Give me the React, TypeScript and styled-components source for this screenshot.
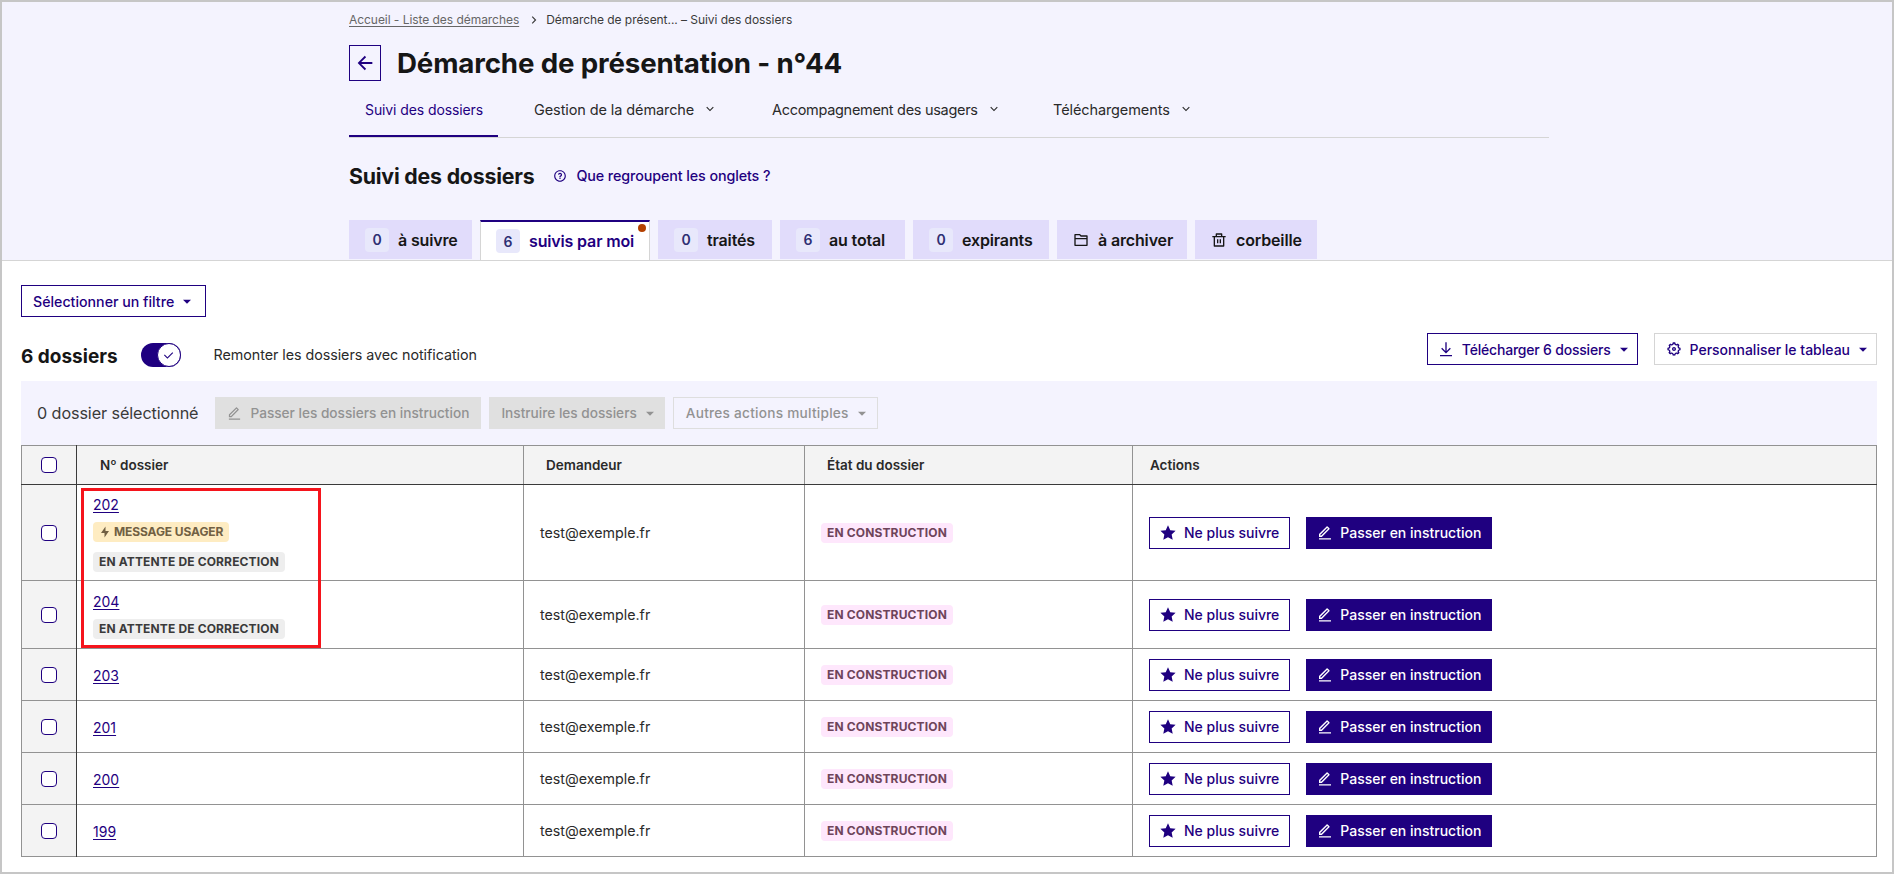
import styled, { createGlobalStyle } from "styled-components"
import {
  RiArrowDownSFill,
  RiArrowDownSLine,
  RiArrowLeftLine,
  RiArrowRightSLine,
  RiCheckLine,
  RiDeleteBinLine,
  RiEditLine,
  RiFlashlightFill,
  RiFolder2Line,
  RiQuestionLine,
  RiSettings5Line,
  RiStarFill,
} from "react-icons/ri"

const PRIMARY = "#1f0080"
const FONT = `"Inter", "Noto Sans", "Liberation Sans", sans-serif`

const GlobalStyle = createGlobalStyle`
  * {
    box-sizing: border-box;
  }

  html, body {
    margin: 0;
    padding: 0;
    background: #fff;
    color: #161616;
    font-family: ${FONT};
  }
`

const Page = styled.div`
  width: 1894px;
  height: 874px;
  overflow: hidden;
  border: 2px solid #c6c6c6;
  background: #fff;
`

const Header = styled.header`
  height: 259px;
  background: #f4f3fe;
  border-bottom: 1px solid #d5d5d5;
`

const HeaderInner = styled.div`
  width: 1200px;
  margin-left: 347px;
  height: 100%;
  display: flex;
  flex-direction: column;
`

const Breadcrumb = styled.nav`
  display: flex;
  align-items: center;
  height: 16px;
  margin-top: 10px;
  font-size: 12px;
  letter-spacing: -0.05px;
  color: #3a3a3a;

  a {
    color: #666;
    text-decoration: underline;
    text-underline-offset: 2px;
  }

  svg {
    margin: 0 5px 0 8px;
  }
`

const TitleRow = styled.div`
  display: flex;
  align-items: center;
  gap: 16px;
  margin-top: 18px;
`

const BackButton = styled.button`
  width: 32px;
  height: 36px;
  padding: 0;
  display: flex;
  align-items: center;
  justify-content: center;
  background: transparent;
  border: 1px solid ${PRIMARY};
  color: ${PRIMARY};
`

const Title = styled.h1`
  margin: 0;
  font-size: 27.7px;
  line-height: 36px;
  font-weight: 700;
  letter-spacing: -0.15px;
  color: #161616;
`

const MainNav = styled.nav`
  display: flex;
  gap: 20px;
  height: 57px;
  border-bottom: 1px solid #d5d5d5;
`

const NavItem = styled.a<{ $active?: boolean; $tight?: boolean; $width: number }>`
  flex-shrink: 0;
  display: flex;
  align-items: center;
  gap: 9px;
  width: ${(p) => p.$width}px;
  height: 56px;
  padding-left: 16px;
  font-size: ${(p) => (p.$active ? 14 : 14.5)}px;
  letter-spacing: ${(p) => (p.$tight ? "-0.3px" : "-0.1px")};
  white-space: nowrap;
  color: ${(p) => (p.$active ? PRIMARY : "#2a2a2a")};
  box-shadow: ${(p) => (p.$active ? `inset 0 -2px 0 ${PRIMARY}` : "none")};
`

const SectionRow = styled.div`
  display: flex;
  align-items: center;
  margin-top: 20px;
  height: 36px;
`

const SectionTitle = styled.h2`
  margin: 0;
  font-size: 21.3px;
  font-weight: 700;
  letter-spacing: -0.2px;
  color: #161616;
`

const HelpLink = styled.a`
  display: flex;
  align-items: center;
  gap: 9px;
  margin-left: 19px;
  font-size: 14.3px;
  font-weight: 500;
  letter-spacing: -0.1px;
  color: ${PRIMARY};
`

const Tabs = styled.div`
  display: flex;
  gap: 8px;
  margin-top: 27px;
`

const Tab = styled.div<{ $active?: boolean; $width: number }>`
  position: relative;
  flex-shrink: 0;
  display: flex;
  align-items: center;
  gap: 9px;
  width: ${(p) => p.$width}px;
  height: ${(p) => (p.$active ? 40 : 39)}px;
  padding-left: ${(p) => (p.$active ? 15 : 16)}px;
  font-size: 16px;
  font-weight: 600;
  letter-spacing: -0.15px;
  white-space: nowrap;
  color: ${(p) => (p.$active ? PRIMARY : "#161616")};
  background: ${(p) => (p.$active ? "#fff" : "#e1dcfb")};
  border-top: ${(p) => (p.$active ? `2px solid ${PRIMARY}` : "none")};
  border-left: ${(p) => (p.$active ? "1px solid #d5d5d5" : "none")};
  border-right: ${(p) => (p.$active ? "1px solid #d5d5d5" : "none")};
`

const TabCount = styled.span`
  display: flex;
  align-items: center;
  justify-content: center;
  width: 24px;
  height: 24px;
  border-radius: 4px;
  background: #e8e8fb;
  color: #2f2f73;
  font-size: 14px;
  font-weight: 600;
`

const TabDot = styled.span`
  position: absolute;
  top: 2px;
  right: 3px;
  width: 8px;
  height: 8px;
  border-radius: 50%;
  background: #b34000;
`

const Content = styled.main`
  padding: 24px 15px 0 19px;
`

const Caret = styled(RiArrowDownSFill)`
  flex-shrink: 0;
  margin: 0 -5px 0 -3px;
`

const OutlineButton = styled.button<{ $muted?: boolean; $tight?: boolean }>`
  display: inline-flex;
  align-items: center;
  gap: 8px;
  height: 32px;
  padding: 0 10px 0 ${(p) => (p.$muted ? 11 : 10)}px;
  background: #fff;
  border: 1px solid ${(p) => (p.$muted ? "#d5d5d5" : PRIMARY)};
  color: ${PRIMARY};
  font-family: ${FONT};
  font-size: 14px;
  font-weight: 500;
  letter-spacing: ${(p) => (p.$tight ? "-0.2px" : "0")};
  white-space: nowrap;
`

const FilterButton = styled(OutlineButton)`
  padding: 0 15px 0 11px;
  font-size: 14.2px;
`

const SummaryRow = styled.div`
  display: flex;
  align-items: flex-start;
  margin-top: 16px;
  height: 32px;
`

const DossierCount = styled.strong`
  margin-top: 10px;
  font-size: 19px;
  line-height: 28px;
  font-weight: 700;
`

const Toggle = styled.span`
  position: relative;
  flex-shrink: 0;
  width: 40px;
  height: 24px;
  margin: 10px 0 0 23px;
  border-radius: 12px;
  background: ${PRIMARY};
`

const ToggleThumb = styled.span`
  position: absolute;
  top: 0;
  right: 0;
  width: 24px;
  height: 24px;
  display: flex;
  align-items: center;
  justify-content: center;
  border-radius: 50%;
  border: 1px solid ${PRIMARY};
  background: #fff;
  color: ${PRIMARY};
`

const ToggleLabel = styled.span`
  margin: 12px 0 0 33px;
  font-size: 14.3px;
  line-height: 20px;
  letter-spacing: -0.05px;
  color: #2a2a2a;
`

const SummaryActions = styled.div`
  display: flex;
  gap: 16px;
  margin-left: auto;
`

const BulkBar = styled.div`
  display: flex;
  align-items: center;
  gap: 8px;
  height: 64px;
  margin-top: 16px;
  padding-left: 16px;
  background: #f4f3fe;
`

const BulkLabel = styled.span`
  margin-right: 9px;
  font-size: 16.2px;
  letter-spacing: -0.1px;
  color: #3a3a3a;
`

const DisabledButton = styled.button<{ $outlined?: boolean }>`
  display: inline-flex;
  align-items: center;
  gap: 8px;
  height: 32px;
  padding: 0 12px;
  background: ${(p) => (p.$outlined ? "transparent" : "#e0e0e0")};
  border: ${(p) => (p.$outlined ? "1px solid #dedede" : "none")};
  color: #929292;
  font-family: ${FONT};
  font-size: 13.65px;
  font-weight: 500;
  letter-spacing: ${(p) => (p.$outlined ? "0.25px" : "0")};
  white-space: nowrap;
`

const TableWrap = styled.div`
  position: relative;
`

const Table = styled.table`
  width: 1856px;
  table-layout: fixed;
  border-collapse: collapse;
  border: 1px solid #929292;
`

const HeadCell = styled.th<{ $pad?: number }>`
  height: 39px;
  padding: 0 0 0 ${(p) => p.$pad ?? 17}px;
  background: #f3f3f3;
  border-left: 1px solid #929292;
  border-bottom: 1px solid #3a3a3a;
  text-align: left;
  font-size: 13.5px;
  font-weight: 600;
  color: #2a2a2a;
`

const CheckHeadCell = styled(HeadCell)`
  padding: 0;
  border-left: none;
  border-right: 1px solid #3a3a3a;
`

const Row = styled.tr`
  border-bottom: 1px solid #929292;

  &:last-child {
    border-bottom: none;
  }
`

const Cell = styled.td<{ $height?: number }>`
  height: ${(p) => p.$height ?? 52}px;
  padding: 0 0 0 16px;
  border-left: 1px solid #929292;
  font-size: 14.25px;
  color: #2a2a2a;
`

const CheckCell = styled.td`
  padding: 0;
  background: #f3f3f3;
  border-right: 1px solid #3a3a3a;
`

const Checkbox = styled.span`
  display: block;
  width: 16px;
  height: 16px;
  margin-left: 19px;
  border: 1px solid ${PRIMARY};
  border-radius: 4px;
  background: #fff;
`

const NumberStack = styled.div`
  display: flex;
  flex-direction: column;
  align-items: flex-start;
  gap: 10px;
  padding-top: 2px;
`

const DossierLink = styled.a<{ $stacked?: boolean }>`
  margin-bottom: ${(p) => (p.$stacked ? -2 : 0)}px;
  color: ${PRIMARY};
  font-size: 14px;
  line-height: 18px;
  text-decoration: underline;
  text-underline-offset: 2px;
`

const Badge = styled.span<{ $bg: string; $fg: string; $tight?: boolean }>`
  display: inline-flex;
  align-items: center;
  gap: 3px;
  height: 20px;
  padding: 0 6px;
  border-radius: 4px;
  background: ${(p) => p.$bg};
  color: ${(p) => p.$fg};
  font-size: 12px;
  font-weight: 700;
  letter-spacing: ${(p) => (p.$tight ? "-0.1px" : "0.15px")};
  white-space: nowrap;
`

const Actions = styled.div`
  display: flex;
  gap: 16px;
`

const PrimaryButton = styled.button`
  display: inline-flex;
  align-items: center;
  gap: 7px;
  height: 32px;
  padding: 0 11px;
  background: ${PRIMARY};
  border: none;
  color: #fff;
  font-family: ${FONT};
  font-size: 14px;
  font-weight: 500;
  white-space: nowrap;
`

const Highlight = styled.div`
  position: absolute;
  top: 43px;
  left: 60px;
  width: 240px;
  height: 160px;
  border: 3px solid #f5141c;
  pointer-events: none;
`

const DownloadIcon = () => (
  <svg width="16" height="16" viewBox="0 0 24 24" fill="none" stroke="currentColor" strokeWidth="2">
    <path d="M12 2v15M5.5 11l6.5 6.5 6.5-6.5M3 22h18" />
  </svg>
)

const dossiers = [
  { id: 202, height: 96, message: true, correction: true },
  { id: 204, height: 68, correction: true },
  { id: 203 },
  { id: 201 },
  { id: 200 },
  { id: 199 },
]

const navItems = [
  { label: "Gestion de la démarche", width: 218 },
  { label: "Accompagnement des usagers", width: 261, tight: true },
  { label: "Téléchargements", width: 180 },
]

const tabs = [
  { count: 0, label: "à suivre", width: 123 },
  { count: 6, label: "suivis par moi", width: 170, active: true },
  { count: 0, label: "traités", width: 114 },
  { count: 6, label: "au total", width: 125 },
  { count: 0, label: "expirants", width: 136 },
]

const App = () => {
  return (
    <Page>
      <GlobalStyle />
      <Header>
        <HeaderInner>
          <Breadcrumb>
            <a>Accueil - Liste des démarches</a>
            <RiArrowRightSLine size={14} />
            <span>Démarche de présent... – Suivi des dossiers</span>
          </Breadcrumb>
          <TitleRow>
            <BackButton>
              <RiArrowLeftLine size={22} />
            </BackButton>
            <Title>Démarche de présentation - n°44</Title>
          </TitleRow>
          <MainNav>
            <NavItem $active $width={149}>Suivi des dossiers</NavItem>
            {navItems.map((item) => (
              <NavItem key={item.label} $width={item.width} $tight={item.tight}>
                {item.label}
                <RiArrowDownSLine size={14} />
              </NavItem>
            ))}
          </MainNav>
          <SectionRow>
            <SectionTitle>Suivi des dossiers</SectionTitle>
            <HelpLink>
              <RiQuestionLine size={14} />
              Que regroupent les onglets ?
            </HelpLink>
          </SectionRow>
          <Tabs>
            {tabs.map((tab) => (
              <Tab key={tab.label} $active={tab.active} $width={tab.width}>
                <TabCount>{tab.count}</TabCount>
                {tab.label}
                {tab.active && <TabDot />}
              </Tab>
            ))}
            <Tab $width={130}>
              <RiFolder2Line size={16} />
              à archiver
            </Tab>
            <Tab $width={122}>
              <RiDeleteBinLine size={16} />
              corbeille
            </Tab>
          </Tabs>
        </HeaderInner>
      </Header>
      <Content>
        <FilterButton>
          Sélectionner un filtre
          <Caret size={16} />
        </FilterButton>
        <SummaryRow>
          <DossierCount>6 dossiers</DossierCount>
          <Toggle>
            <ToggleThumb>
              <RiCheckLine size={13} />
            </ToggleThumb>
          </Toggle>
          <ToggleLabel>Remonter les dossiers avec notification</ToggleLabel>
          <SummaryActions>
            <OutlineButton $tight>
              <DownloadIcon />
              Télécharger 6 dossiers
              <Caret size={16} />
            </OutlineButton>
            <OutlineButton $muted>
              <RiSettings5Line size={16} />
              Personnaliser le tableau
              <Caret size={16} />
            </OutlineButton>
          </SummaryActions>
        </SummaryRow>
        <BulkBar>
          <BulkLabel>0 dossier sélectionné</BulkLabel>
          <DisabledButton>
            <RiEditLine size={15} />
            Passer les dossiers en instruction
          </DisabledButton>
          <DisabledButton>
            Instruire les dossiers
            <Caret size={16} />
          </DisabledButton>
          <DisabledButton $outlined>
            Autres actions multiples
            <Caret size={16} />
          </DisabledButton>
        </BulkBar>
        <TableWrap>
          <Table>
            <colgroup>
              <col width={55} />
              <col width={447} />
              <col width={281} />
              <col width={328} />
              <col />
            </colgroup>
            <thead>
              <tr>
                <CheckHeadCell>
                  <Checkbox />
                </CheckHeadCell>
                <HeadCell $pad={23}>Nº dossier</HeadCell>
                <HeadCell $pad={22}>Demandeur</HeadCell>
                <HeadCell $pad={22}>État du dossier</HeadCell>
                <HeadCell>Actions</HeadCell>
              </tr>
            </thead>
            <tbody>
              {dossiers.map((dossier) => (
                <Row key={dossier.id}>
                  <CheckCell>
                    <Checkbox />
                  </CheckCell>
                  <Cell $height={dossier.height}>
                    <NumberStack>
                      <DossierLink $stacked={dossier.correction}>{dossier.id}</DossierLink>
                      {dossier.message && (
                        <Badge $bg="#feecc2" $fg="#716043" $tight>
                          <RiFlashlightFill size={12} />
                          MESSAGE USAGER
                        </Badge>
                      )}
                      {dossier.correction && (
                        <Badge $bg="#eeeeee" $fg="#3a3a3a">EN ATTENTE DE CORRECTION</Badge>
                      )}
                    </NumberStack>
                  </Cell>
                  <Cell>test@exemple.fr</Cell>
                  <Cell>
                    <Badge $bg="#fee7fc" $fg="#6e445a">EN CONSTRUCTION</Badge>
                  </Cell>
                  <Cell>
                    <Actions>
                      <OutlineButton>
                        <RiStarFill size={16} />
                        Ne plus suivre
                      </OutlineButton>
                      <PrimaryButton>
                        <RiEditLine size={16} />
                        Passer en instruction
                      </PrimaryButton>
                    </Actions>
                  </Cell>
                </Row>
              ))}
            </tbody>
          </Table>
          <Highlight />
        </TableWrap>
      </Content>
    </Page>
  )
}

export default App
